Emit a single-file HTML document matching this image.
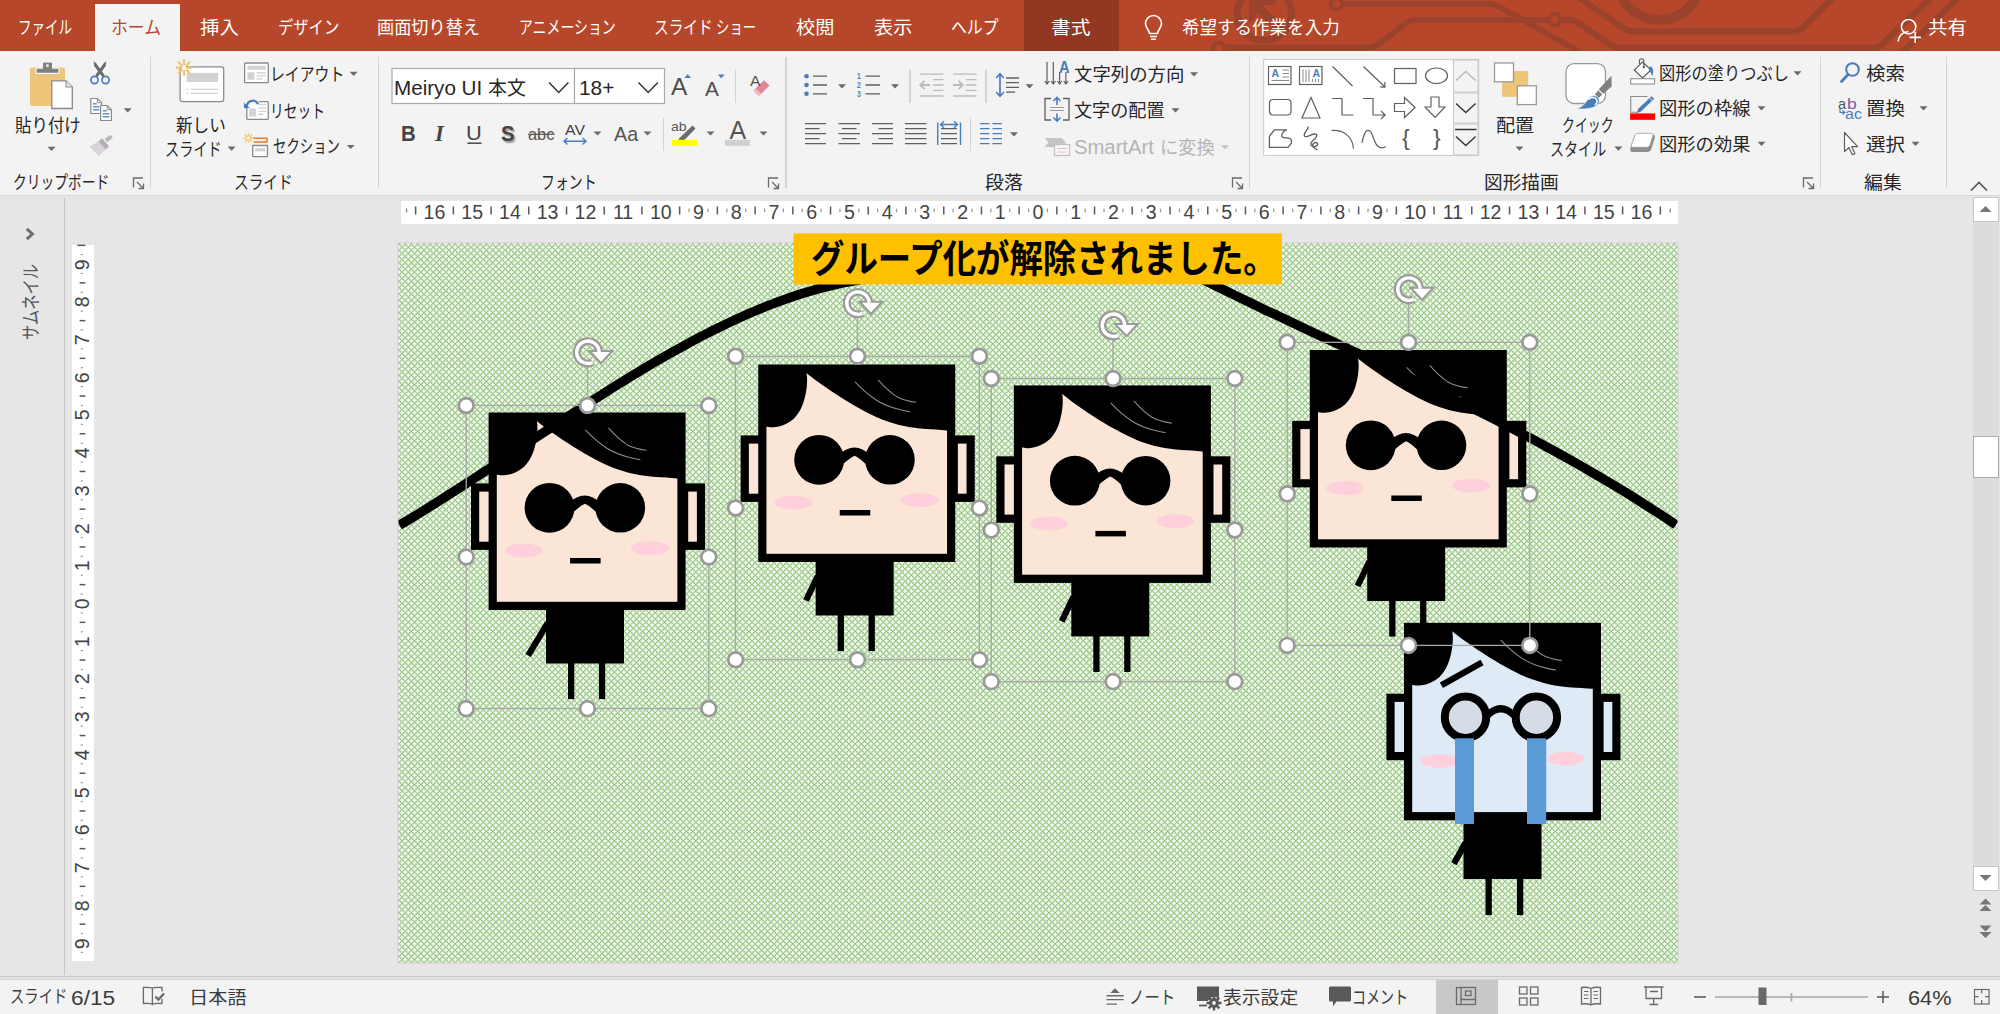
<!DOCTYPE html>
<html lang="ja"><head><meta charset="utf-8"><title>PowerPoint</title>
<style>
html,body{margin:0;padding:0}
body{width:2000px;height:1014px;position:relative;overflow:hidden;background:#e6e6e6;font-family:"Liberation Sans","Noto Sans CJK JP",sans-serif;}
body>div{position:absolute;box-sizing:border-box}
.t{position:absolute;white-space:nowrap;line-height:1;transform-origin:0 0;display:block}
svg{position:absolute;left:0;top:0;overflow:visible}
.rt{position:absolute;white-space:nowrap;line-height:1;font-size:19.600px;color:#444}
</style></head><body>
<div style="left:0px;top:0px;width:2000px;height:51px;background:#b7472a;"></div>
<div style="left:1024px;top:0px;width:95px;height:51px;background:#923822;"></div>
<div style="left:95px;top:4px;width:85px;height:48px;background:#f3f3f3;"></div>
<div style="left:0px;top:51px;width:2000px;height:143.6px;background:#f3f3f3;"></div>
<div style="left:0px;top:194.6px;width:2000px;height:1.5px;background:#d8d8d8;"></div>
<div style="left:0px;top:196.1px;width:2000px;height:782px;background:#e6e6e6;"></div>
<div style="left:63.5px;top:198px;width:1.5px;height:777px;background:#c6c6c6;"></div>
<div style="left:0px;top:977px;width:2000px;height:37px;background:#f3f3f3;"></div>
<div style="left:0px;top:975.6px;width:2000px;height:1.4px;background:#c6c6c6;"></div>
<div style="left:0px;top:977px;width:2000px;height:1.6px;background:#e3e3e3;"></div>
<div style="left:0px;top:978.6px;width:2000px;height:1.2px;background:#d2d2d2;"></div>
<div style="left:1436px;top:980px;width:61.5px;height:34px;background:#c8c8c8;"></div>
<div style="left:401px;top:201px;width:1276.5px;height:22.5px;background:#ffffff;"></div>
<div style="left:72px;top:244.5px;width:22px;height:716px;background:#ffffff;"></div>
<div style="left:1973px;top:196.5px;width:25.5px;height:694px;background:#dcdcdc;"></div>
<div style="left:1973px;top:196.5px;width:25.5px;height:25.5px;background:#ffffff;border:1px solid #c6c6c6"></div>
<div style="left:1973px;top:865.5px;width:25.5px;height:25px;background:#ffffff;border:1px solid #c6c6c6"></div>
<div style="left:1973px;top:435.5px;width:25.5px;height:42.5px;background:#ffffff;border:1px solid #ababab"></div>
<div style="left:149.8px;top:57px;width:1.3px;height:131px;background:#d4d4d4;"></div>
<div style="left:377.6px;top:57px;width:1.3px;height:131px;background:#d4d4d4;"></div>
<div style="left:785.4px;top:57px;width:1.3px;height:131px;background:#d4d4d4;"></div>
<div style="left:1249.1px;top:57px;width:1.3px;height:131px;background:#d4d4d4;"></div>
<div style="left:1820px;top:57px;width:1.3px;height:131px;background:#d4d4d4;"></div>
<div style="left:1946px;top:57px;width:1.3px;height:131px;background:#d4d4d4;"></div>
<div style="left:735px;top:69px;width:1.3px;height:34px;background:#d4d4d4;"></div>
<div style="left:662.7px;top:118px;width:1.3px;height:33px;background:#d4d4d4;"></div>
<div style="left:909.4px;top:70px;width:1.3px;height:33px;background:#d4d4d4;"></div>
<div style="left:985.4px;top:70px;width:1.3px;height:33px;background:#d4d4d4;"></div>
<div style="left:969.8px;top:118px;width:1.3px;height:33px;background:#d4d4d4;"></div>
<svg width="2000" height="1014" viewBox="0 0 2000 1014">
<defs>
<pattern id="hatch" x="398.2" y="243.2" width="25" height="25" patternUnits="userSpaceOnUse">
<rect width="25" height="25" fill="#fff"/>
<path d="M1.5625 1.5625h1.5625v1.5625h-1.5625zM1.5625 4.6875h1.5625v1.5625h-1.5625zM1.5625 7.8125h1.5625v1.5625h-1.5625zM1.5625 10.9375h1.5625v1.5625h-1.5625zM1.5625 14.0625h1.5625v1.5625h-1.5625zM1.5625 17.1875h1.5625v1.5625h-1.5625zM1.5625 20.3125h1.5625v1.5625h-1.5625zM1.5625 23.4375h1.5625v1.5625h-1.5625zM4.6875 1.5625h1.5625v1.5625h-1.5625zM4.6875 4.6875h1.5625v1.5625h-1.5625zM4.6875 7.8125h1.5625v1.5625h-1.5625zM4.6875 10.9375h1.5625v1.5625h-1.5625zM4.6875 14.0625h1.5625v1.5625h-1.5625zM4.6875 17.1875h1.5625v1.5625h-1.5625zM4.6875 20.3125h1.5625v1.5625h-1.5625zM4.6875 23.4375h1.5625v1.5625h-1.5625zM7.8125 1.5625h1.5625v1.5625h-1.5625zM7.8125 4.6875h1.5625v1.5625h-1.5625zM7.8125 7.8125h1.5625v1.5625h-1.5625zM7.8125 10.9375h1.5625v1.5625h-1.5625zM7.8125 14.0625h1.5625v1.5625h-1.5625zM7.8125 17.1875h1.5625v1.5625h-1.5625zM7.8125 20.3125h1.5625v1.5625h-1.5625zM7.8125 23.4375h1.5625v1.5625h-1.5625zM10.9375 1.5625h1.5625v1.5625h-1.5625zM10.9375 4.6875h1.5625v1.5625h-1.5625zM10.9375 7.8125h1.5625v1.5625h-1.5625zM10.9375 10.9375h1.5625v1.5625h-1.5625zM10.9375 14.0625h1.5625v1.5625h-1.5625zM10.9375 17.1875h1.5625v1.5625h-1.5625zM10.9375 20.3125h1.5625v1.5625h-1.5625zM10.9375 23.4375h1.5625v1.5625h-1.5625zM14.0625 1.5625h1.5625v1.5625h-1.5625zM14.0625 4.6875h1.5625v1.5625h-1.5625zM14.0625 7.8125h1.5625v1.5625h-1.5625zM14.0625 10.9375h1.5625v1.5625h-1.5625zM14.0625 14.0625h1.5625v1.5625h-1.5625zM14.0625 17.1875h1.5625v1.5625h-1.5625zM14.0625 20.3125h1.5625v1.5625h-1.5625zM14.0625 23.4375h1.5625v1.5625h-1.5625zM17.1875 1.5625h1.5625v1.5625h-1.5625zM17.1875 4.6875h1.5625v1.5625h-1.5625zM17.1875 7.8125h1.5625v1.5625h-1.5625zM17.1875 10.9375h1.5625v1.5625h-1.5625zM17.1875 14.0625h1.5625v1.5625h-1.5625zM17.1875 17.1875h1.5625v1.5625h-1.5625zM17.1875 20.3125h1.5625v1.5625h-1.5625zM17.1875 23.4375h1.5625v1.5625h-1.5625zM20.3125 1.5625h1.5625v1.5625h-1.5625zM20.3125 4.6875h1.5625v1.5625h-1.5625zM20.3125 7.8125h1.5625v1.5625h-1.5625zM20.3125 10.9375h1.5625v1.5625h-1.5625zM20.3125 14.0625h1.5625v1.5625h-1.5625zM20.3125 17.1875h1.5625v1.5625h-1.5625zM20.3125 20.3125h1.5625v1.5625h-1.5625zM20.3125 23.4375h1.5625v1.5625h-1.5625zM23.4375 1.5625h1.5625v1.5625h-1.5625zM23.4375 4.6875h1.5625v1.5625h-1.5625zM23.4375 7.8125h1.5625v1.5625h-1.5625zM23.4375 10.9375h1.5625v1.5625h-1.5625zM23.4375 14.0625h1.5625v1.5625h-1.5625zM23.4375 17.1875h1.5625v1.5625h-1.5625zM23.4375 20.3125h1.5625v1.5625h-1.5625zM23.4375 23.4375h1.5625v1.5625h-1.5625z" fill="#4e9f2a" fill-opacity=".75"/>
<path d="M0 0h1.5625v1.5625h-1.5625zM0 6.25h1.5625v1.5625h-1.5625zM0 12.5h1.5625v1.5625h-1.5625zM0 18.75h1.5625v1.5625h-1.5625zM3.125 3.125h1.5625v1.5625h-1.5625zM3.125 9.375h1.5625v1.5625h-1.5625zM3.125 15.625h1.5625v1.5625h-1.5625zM3.125 21.875h1.5625v1.5625h-1.5625zM6.25 0h1.5625v1.5625h-1.5625zM6.25 6.25h1.5625v1.5625h-1.5625zM6.25 12.5h1.5625v1.5625h-1.5625zM6.25 18.75h1.5625v1.5625h-1.5625zM9.375 3.125h1.5625v1.5625h-1.5625zM9.375 9.375h1.5625v1.5625h-1.5625zM9.375 15.625h1.5625v1.5625h-1.5625zM9.375 21.875h1.5625v1.5625h-1.5625zM12.5 0h1.5625v1.5625h-1.5625zM12.5 6.25h1.5625v1.5625h-1.5625zM12.5 12.5h1.5625v1.5625h-1.5625zM12.5 18.75h1.5625v1.5625h-1.5625zM15.625 3.125h1.5625v1.5625h-1.5625zM15.625 9.375h1.5625v1.5625h-1.5625zM15.625 15.625h1.5625v1.5625h-1.5625zM15.625 21.875h1.5625v1.5625h-1.5625zM18.75 0h1.5625v1.5625h-1.5625zM18.75 6.25h1.5625v1.5625h-1.5625zM18.75 12.5h1.5625v1.5625h-1.5625zM18.75 18.75h1.5625v1.5625h-1.5625zM21.875 3.125h1.5625v1.5625h-1.5625zM21.875 9.375h1.5625v1.5625h-1.5625zM21.875 15.625h1.5625v1.5625h-1.5625zM21.875 21.875h1.5625v1.5625h-1.5625z" fill="#4e9f2a" fill-opacity=".97"/>
</pattern>
<clipPath id="slideclip"><rect x="398.5" y="243.5" width="1279.0" height="719.0"/></clipPath>
</defs>
<rect x="397.5" y="242.5" width="1281.0" height="721.0" fill="#cfcfcf"/>
<rect x="398.5" y="243.5" width="1279.0" height="719.0" fill="url(#hatch)"/>
<g clip-path="url(#slideclip)">
<g transform="translate(488.6 412.5)"><rect x="79.4" y="250" width="6.3" height="36.6"/><rect x="110.3" y="250" width="6.3" height="36.6"/><path d="M59.2 210.3L39.5 243" stroke="#000" stroke-width="6.200" fill="none"/><rect x="57.4" y="195" width="78" height="56"/><rect x="-13.500" y="75" width="20" height="58.300" fill="#fbe5d6" stroke="#000" stroke-width="8.200"/><rect x="195.500" y="75" width="16.900" height="58.300" fill="#fbe5d6" stroke="#000" stroke-width="8.200"/><rect x="4.100" y="4.100" width="188.800" height="189.300" fill="#fbe5d6" stroke="#000" stroke-width="8.200"/><path d="M4 4H48.3V8.2C49.600 17 48.500 27 45.700 36.300C43 45 39 51 35.800 53.900C30 59 23 62 17 62.500C13 63 10 62.600 8 62.200H4Z"/><path d="M48 4H193V66H188.700C181 65.300 174 65 167.800 64.600C160 64 152 62.800 145.800 61.600C138 60 130 57.400 123.800 55C116 52 108 47.600 101.800 44.200C94 40 86 35 79.800 31C72 26 64 20.500 57.800 16C54 13.200 51 10.700 48 8.200Z"/><path d="M96.800 17.400C103 24 111 31 118.300 35.800C125 40 133 43 140.300 44.800C144 45.800 148 46.600 151.800 47.300" fill="none" stroke="#8a8a8a" stroke-width="1.100"/><path d="M119.900 15.400C124 20 131 27.500 138.100 31.900C144 35.300 151 36.800 157.900 37.700" fill="none" stroke="#8a8a8a" stroke-width="1.100"/><ellipse cx="35.100" cy="138.100" rx="18.800" ry="7" fill="#fdd0dc"/><ellipse cx="161.300" cy="135.800" rx="18.800" ry="7" fill="#fdd0dc"/><circle cx="60.900" cy="95.300" r="24.900"/><circle cx="131.700" cy="95.300" r="24.800"/><path d="M80 90.500Q96.400 75.500 112 90.500V101L106.800 99.100Q101 93 96.400 91.200Q92 93 85.500 99.100L80 101Z"/><rect x="81.500" y="145.500" width="30.500" height="5.500"/></g>
<g transform="translate(758.25 364.5)"><rect x="79.4" y="250" width="6.3" height="36.6"/><rect x="110.3" y="250" width="6.3" height="36.6"/><path d="M59.5 211.5L47.8 236" stroke="#000" stroke-width="6.200" fill="none"/><rect x="57.4" y="195" width="78" height="56"/><rect x="-13.500" y="75" width="20" height="58.300" fill="#fbe5d6" stroke="#000" stroke-width="8.200"/><rect x="195.500" y="75" width="16.900" height="58.300" fill="#fbe5d6" stroke="#000" stroke-width="8.200"/><rect x="4.100" y="4.100" width="188.800" height="189.300" fill="#fbe5d6" stroke="#000" stroke-width="8.200"/><path d="M4 4H48.3V8.2C49.600 17 48.500 27 45.700 36.300C43 45 39 51 35.800 53.900C30 59 23 62 17 62.500C13 63 10 62.600 8 62.200H4Z"/><path d="M48 4H193V66H188.700C181 65.300 174 65 167.800 64.600C160 64 152 62.800 145.800 61.600C138 60 130 57.400 123.800 55C116 52 108 47.600 101.800 44.200C94 40 86 35 79.800 31C72 26 64 20.500 57.800 16C54 13.200 51 10.700 48 8.200Z"/><path d="M96.800 17.400C103 24 111 31 118.300 35.800C125 40 133 43 140.300 44.800C144 45.800 148 46.600 151.800 47.300" fill="none" stroke="#8a8a8a" stroke-width="1.100"/><path d="M119.900 15.400C124 20 131 27.500 138.100 31.900C144 35.300 151 36.800 157.900 37.700" fill="none" stroke="#8a8a8a" stroke-width="1.100"/><ellipse cx="35.100" cy="138.100" rx="18.800" ry="7" fill="#fdd0dc"/><ellipse cx="161.300" cy="135.800" rx="18.800" ry="7" fill="#fdd0dc"/><circle cx="60.900" cy="95.300" r="24.900"/><circle cx="131.700" cy="95.300" r="24.800"/><path d="M80 90.500Q96.400 75.500 112 90.500V101L106.800 99.100Q101 93 96.400 91.200Q92 93 85.500 99.100L80 101Z"/><rect x="81.500" y="145.500" width="30.500" height="5.500"/></g>
<g transform="translate(1013.9 385.4)"><rect x="79.4" y="250" width="6.3" height="36.6"/><rect x="110.3" y="250" width="6.3" height="36.6"/><path d="M59.5 211.5L47.8 236" stroke="#000" stroke-width="6.200" fill="none"/><rect x="57.4" y="195" width="78" height="56"/><rect x="-13.500" y="75" width="20" height="58.300" fill="#fbe5d6" stroke="#000" stroke-width="8.200"/><rect x="195.500" y="75" width="16.900" height="58.300" fill="#fbe5d6" stroke="#000" stroke-width="8.200"/><rect x="4.100" y="4.100" width="188.800" height="189.300" fill="#fbe5d6" stroke="#000" stroke-width="8.200"/><path d="M4 4H48.3V8.2C49.600 17 48.500 27 45.700 36.300C43 45 39 51 35.800 53.900C30 59 23 62 17 62.500C13 63 10 62.600 8 62.200H4Z"/><path d="M48 4H193V66H188.700C181 65.300 174 65 167.800 64.600C160 64 152 62.800 145.800 61.600C138 60 130 57.400 123.800 55C116 52 108 47.600 101.800 44.200C94 40 86 35 79.800 31C72 26 64 20.500 57.800 16C54 13.200 51 10.700 48 8.200Z"/><path d="M96.800 17.400C103 24 111 31 118.300 35.800C125 40 133 43 140.300 44.800C144 45.800 148 46.600 151.800 47.300" fill="none" stroke="#8a8a8a" stroke-width="1.100"/><path d="M119.900 15.400C124 20 131 27.500 138.100 31.900C144 35.300 151 36.800 157.900 37.700" fill="none" stroke="#8a8a8a" stroke-width="1.100"/><ellipse cx="35.100" cy="138.100" rx="18.800" ry="7" fill="#fdd0dc"/><ellipse cx="161.300" cy="135.800" rx="18.800" ry="7" fill="#fdd0dc"/><circle cx="60.900" cy="95.300" r="24.900"/><circle cx="131.700" cy="95.300" r="24.800"/><path d="M80 90.500Q96.400 75.500 112 90.500V101L106.800 99.100Q101 93 96.400 91.200Q92 93 85.500 99.100L80 101Z"/><rect x="81.500" y="145.500" width="30.500" height="5.500"/></g>
<g transform="translate(1309.8 350)"><rect x="79.4" y="250" width="6.3" height="36.6"/><rect x="110.3" y="250" width="6.3" height="36.6"/><path d="M59.5 211.5L47.8 236" stroke="#000" stroke-width="6.200" fill="none"/><rect x="57.4" y="195" width="78" height="56"/><rect x="-13.500" y="75" width="20" height="58.300" fill="#fbe5d6" stroke="#000" stroke-width="8.200"/><rect x="195.500" y="75" width="16.900" height="58.300" fill="#fbe5d6" stroke="#000" stroke-width="8.200"/><rect x="4.100" y="4.100" width="188.800" height="189.300" fill="#fbe5d6" stroke="#000" stroke-width="8.200"/><path d="M4 4H48.3V8.2C49.600 17 48.500 27 45.700 36.300C43 45 39 51 35.800 53.900C30 59 23 62 17 62.500C13 63 10 62.600 8 62.200H4Z"/><path d="M48 4H193V66H188.700C181 65.300 174 65 167.800 64.600C160 64 152 62.800 145.800 61.600C138 60 130 57.400 123.800 55C116 52 108 47.600 101.800 44.200C94 40 86 35 79.800 31C72 26 64 20.500 57.800 16C54 13.200 51 10.700 48 8.200Z"/><path d="M96.800 17.400C103 24 111 31 118.300 35.800C125 40 133 43 140.300 44.800C144 45.800 148 46.600 151.800 47.300" fill="none" stroke="#8a8a8a" stroke-width="1.100"/><path d="M119.900 15.400C124 20 131 27.500 138.100 31.900C144 35.300 151 36.800 157.900 37.700" fill="none" stroke="#8a8a8a" stroke-width="1.100"/><ellipse cx="35.100" cy="138.100" rx="18.800" ry="7" fill="#fdd0dc"/><ellipse cx="161.300" cy="135.800" rx="18.800" ry="7" fill="#fdd0dc"/><circle cx="60.900" cy="95.300" r="24.900"/><circle cx="131.700" cy="95.300" r="24.800"/><path d="M80 90.500Q96.400 75.500 112 90.500V101L106.800 99.100Q101 93 96.400 91.200Q92 93 85.500 99.100L80 101Z"/><rect x="81.500" y="145.500" width="30.500" height="5.500"/></g>
<g transform="translate(1404 622.8)"><rect x="81.5" y="255.2" width="6.3" height="37.1"/><rect x="113" y="255.2" width="6.3" height="37.1"/><path d="M61.6 219.7L49.9 240.9" stroke="#000" stroke-width="6.200" fill="none"/><rect x="59.5" y="195" width="78" height="61.2"/><rect x="-13.500" y="75" width="20" height="58.300" fill="#deebf7" stroke="#000" stroke-width="8.200"/><rect x="195.500" y="75" width="16.900" height="58.300" fill="#deebf7" stroke="#000" stroke-width="8.200"/><rect x="4.100" y="4.100" width="188.800" height="189.300" fill="#deebf7" stroke="#000" stroke-width="8.200"/><path d="M4 4H48.3V8.2C49.600 17 48.500 27 45.700 36.300C43 45 39 51 35.800 53.900C30 59 23 62 17 62.500C13 63 10 62.600 8 62.200H4Z"/><path d="M48 4H193V66H188.700C181 65.300 174 65 167.800 64.600C160 64 152 62.800 145.800 61.600C138 60 130 57.400 123.800 55C116 52 108 47.600 101.800 44.200C94 40 86 35 79.800 31C72 26 64 20.500 57.800 16C54 13.200 51 10.700 48 8.200Z"/><path d="M96.800 17.400C103 24 111 31 118.300 35.800C125 40 133 43 140.300 44.800C144 45.800 148 46.600 151.800 47.300" fill="none" stroke="#8a8a8a" stroke-width="1.100"/><path d="M119.900 15.400C124 20 131 27.500 138.100 31.900C144 35.300 151 36.800 157.900 37.700" fill="none" stroke="#8a8a8a" stroke-width="1.100"/><ellipse cx="35.100" cy="138.100" rx="18.800" ry="7" fill="#fdd0dc"/><ellipse cx="161.300" cy="135.800" rx="18.800" ry="7" fill="#fdd0dc"/><circle cx="61.500" cy="94.400" r="20.700" fill="#d6dce5" stroke="#000" stroke-width="8"/><circle cx="132.400" cy="94.400" r="20.700" fill="#d6dce5" stroke="#000" stroke-width="8"/><path d="M83.500 92.500Q96.800 79.500 110 92.500" fill="none" stroke="#000" stroke-width="7"/><path d="M37.400 62.500L78 39.700" stroke="#000" stroke-width="6.200" fill="none"/><rect x="51" y="115.500" width="19" height="85.700" fill="#5b9bd5"/><rect x="123" y="115.500" width="19.200" height="85.700" fill="#5b9bd5"/></g>
<path d="M399.5 525.2L408.9 519.6L418.3 513.9L427.7 508.1L437.0 502.2L446.4 496.3L455.8 490.3L465.2 484.2L474.6 478.1L484.0 472.0L493.4 465.8L502.7 459.6L512.1 453.4L521.5 447.2L530.9 440.9L540.3 434.7L549.7 428.5L559.1 422.3L568.4 416.2L577.8 410.1L587.2 404.0L596.6 398.0L606.0 392.0L615.4 386.1L624.8 380.3L634.1 374.5L643.5 368.9L652.9 363.3L662.3 357.9L671.7 352.5L681.1 347.3L690.4 342.2L699.8 337.2L709.2 332.3L718.6 327.7L728.0 323.1L737.4 318.7L746.8 314.5L756.1 310.5L765.5 306.7L774.9 303.0L784.3 299.6L793.7 296.3L803.1 293.3L812.5 290.5L821.8 287.9L831.2 285.6L840.6 283.4L850.0 281.6C960.0 261.4 1125.0 240.4 1195 275.600L1205.0 280.6L1215.0 285.6L1225.1 290.5L1235.1 295.4L1245.1 300.3L1255.1 305.1L1265.1 309.9L1275.2 314.6L1285.2 319.3L1295.2 324.1L1305.2 328.8L1315.2 333.5L1325.3 338.1L1335.3 342.8L1345.3 347.5L1355.3 352.2L1365.4 356.8L1375.4 361.5L1385.4 366.2L1395.4 371.0L1405.4 375.7L1415.5 380.5L1425.5 385.3L1435.5 390.1L1445.5 395.0L1455.5 399.9L1465.6 404.8L1475.6 409.8L1485.6 414.8L1495.6 419.9L1505.6 425.1L1515.7 430.3L1525.7 435.6L1535.7 440.9L1545.7 446.3L1555.8 451.8L1565.8 457.4L1575.8 463.0L1585.8 468.8L1595.8 474.6L1605.9 480.5L1615.9 486.5L1625.9 492.6L1635.9 498.8L1645.9 505.2L1656.0 511.6L1666.0 518.1L1676.0 524.8" fill="none" stroke="#000" stroke-width="9.400" stroke-linejoin="round"/>
</g>
<rect x="793.500" y="233.300" width="488.300" height="51.200" fill="#ffc000"/>
<rect x="466.2" y="405.5" width="242.6" height="303.1" fill="none" stroke="#a8a8a8" stroke-width="1.300"/><path d="M587.5 405.5V365.5" stroke="#a8a8a8" stroke-width="1.400"/><g transform="translate(588 352.3)"><path d="M4.500 10.200A11.200 11.200 0 1 1 11 -1.500" fill="none" stroke="#9b9b9b" stroke-width="7.800"/><path d="M4.500 10.200A11.200 11.200 0 1 1 11 -1.500" fill="none" stroke="#fff" stroke-width="3.400"/><path d="M1.500 -1.300H24.300L13 10.800Z" fill="#fff" stroke="#9b9b9b" stroke-width="2.100" stroke-linejoin="miter"/><path d="M9.300 -0.300h3.400v-2.200h-3.400z" fill="#fff"/></g><circle cx="466.2" cy="405.5" r="7.400" fill="#fff" stroke="#999" stroke-width="2.700"/><circle cx="466.2" cy="557.05" r="7.400" fill="#fff" stroke="#999" stroke-width="2.700"/><circle cx="466.2" cy="708.6" r="7.400" fill="#fff" stroke="#999" stroke-width="2.700"/><circle cx="587.5" cy="405.5" r="7.400" fill="#fff" stroke="#999" stroke-width="2.700"/><circle cx="587.5" cy="708.6" r="7.400" fill="#fff" stroke="#999" stroke-width="2.700"/><circle cx="708.8" cy="405.5" r="7.400" fill="#fff" stroke="#999" stroke-width="2.700"/><circle cx="708.8" cy="557.05" r="7.400" fill="#fff" stroke="#999" stroke-width="2.700"/><circle cx="708.8" cy="708.6" r="7.400" fill="#fff" stroke="#999" stroke-width="2.700"/>
<rect x="735.6" y="356.3" width="243.8" height="303.4" fill="none" stroke="#a8a8a8" stroke-width="1.300"/><path d="M857.5 356.3V316.3" stroke="#a8a8a8" stroke-width="1.400"/><g transform="translate(858 303.1)"><path d="M4.500 10.200A11.200 11.200 0 1 1 11 -1.500" fill="none" stroke="#9b9b9b" stroke-width="7.800"/><path d="M4.500 10.200A11.200 11.200 0 1 1 11 -1.500" fill="none" stroke="#fff" stroke-width="3.400"/><path d="M1.500 -1.300H24.300L13 10.800Z" fill="#fff" stroke="#9b9b9b" stroke-width="2.100" stroke-linejoin="miter"/><path d="M9.300 -0.300h3.400v-2.200h-3.400z" fill="#fff"/></g><circle cx="735.6" cy="356.3" r="7.400" fill="#fff" stroke="#999" stroke-width="2.700"/><circle cx="735.6" cy="508" r="7.400" fill="#fff" stroke="#999" stroke-width="2.700"/><circle cx="735.6" cy="659.7" r="7.400" fill="#fff" stroke="#999" stroke-width="2.700"/><circle cx="857.5" cy="356.3" r="7.400" fill="#fff" stroke="#999" stroke-width="2.700"/><circle cx="857.5" cy="659.7" r="7.400" fill="#fff" stroke="#999" stroke-width="2.700"/><circle cx="979.4" cy="356.3" r="7.400" fill="#fff" stroke="#999" stroke-width="2.700"/><circle cx="979.4" cy="508" r="7.400" fill="#fff" stroke="#999" stroke-width="2.700"/><circle cx="979.4" cy="659.7" r="7.400" fill="#fff" stroke="#999" stroke-width="2.700"/>
<rect x="991.3" y="378.5" width="243.5" height="303.1" fill="none" stroke="#a8a8a8" stroke-width="1.300"/><path d="M1113.05 378.5V338.5" stroke="#a8a8a8" stroke-width="1.400"/><g transform="translate(1113.55 325.3)"><path d="M4.500 10.200A11.200 11.200 0 1 1 11 -1.500" fill="none" stroke="#9b9b9b" stroke-width="7.800"/><path d="M4.500 10.200A11.200 11.200 0 1 1 11 -1.500" fill="none" stroke="#fff" stroke-width="3.400"/><path d="M1.500 -1.300H24.300L13 10.800Z" fill="#fff" stroke="#9b9b9b" stroke-width="2.100" stroke-linejoin="miter"/><path d="M9.300 -0.300h3.400v-2.200h-3.400z" fill="#fff"/></g><circle cx="991.3" cy="378.5" r="7.400" fill="#fff" stroke="#999" stroke-width="2.700"/><circle cx="991.3" cy="530.05" r="7.400" fill="#fff" stroke="#999" stroke-width="2.700"/><circle cx="991.3" cy="681.6" r="7.400" fill="#fff" stroke="#999" stroke-width="2.700"/><circle cx="1113.05" cy="378.5" r="7.400" fill="#fff" stroke="#999" stroke-width="2.700"/><circle cx="1113.05" cy="681.6" r="7.400" fill="#fff" stroke="#999" stroke-width="2.700"/><circle cx="1234.8" cy="378.5" r="7.400" fill="#fff" stroke="#999" stroke-width="2.700"/><circle cx="1234.8" cy="530.05" r="7.400" fill="#fff" stroke="#999" stroke-width="2.700"/><circle cx="1234.8" cy="681.6" r="7.400" fill="#fff" stroke="#999" stroke-width="2.700"/>
<rect x="1287.2" y="342.3" width="242.6" height="303.1" fill="none" stroke="#a8a8a8" stroke-width="1.300"/><path d="M1408.5 342.3V302.3" stroke="#a8a8a8" stroke-width="1.400"/><g transform="translate(1409 289.1)"><path d="M4.500 10.200A11.200 11.200 0 1 1 11 -1.500" fill="none" stroke="#9b9b9b" stroke-width="7.800"/><path d="M4.500 10.200A11.200 11.200 0 1 1 11 -1.500" fill="none" stroke="#fff" stroke-width="3.400"/><path d="M1.500 -1.300H24.300L13 10.800Z" fill="#fff" stroke="#9b9b9b" stroke-width="2.100" stroke-linejoin="miter"/><path d="M9.300 -0.300h3.400v-2.200h-3.400z" fill="#fff"/></g><circle cx="1287.2" cy="342.3" r="7.400" fill="#fff" stroke="#999" stroke-width="2.700"/><circle cx="1287.2" cy="493.85" r="7.400" fill="#fff" stroke="#999" stroke-width="2.700"/><circle cx="1287.2" cy="645.4" r="7.400" fill="#fff" stroke="#999" stroke-width="2.700"/><circle cx="1408.5" cy="342.3" r="7.400" fill="#fff" stroke="#999" stroke-width="2.700"/><circle cx="1408.5" cy="645.4" r="7.400" fill="#fff" stroke="#999" stroke-width="2.700"/><circle cx="1529.8" cy="342.3" r="7.400" fill="#fff" stroke="#999" stroke-width="2.700"/><circle cx="1529.8" cy="493.85" r="7.400" fill="#fff" stroke="#999" stroke-width="2.700"/><circle cx="1529.8" cy="645.4" r="7.400" fill="#fff" stroke="#999" stroke-width="2.700"/>
</svg>
<svg width="2000" height="1014" viewBox="0 0 2000 1014">
<defs><clipPath id="tabclip"><rect x="1119" y="0" width="881" height="51"/></clipPath></defs>
<g fill="none" stroke="#9a422b" stroke-width="5.800" clip-path="url(#tabclip)"><circle cx="1264.400" cy="13.300" r="27.100" stroke-width="7.300"/><path d="M1249 -2H1275.600V4L1263 5.600L1286 29.400L1277 33L1258 13.300L1249 23.800Z" fill="#9a422b" stroke="none"/><circle cx="1336.400" cy="3.800" r="5.700" stroke-width="4"/><path d="M1343.500 3.800H1488c5 0 8 1 12 3.500L1580 52"/><circle cx="1218.900" cy="48.300" r="5.700" stroke-width="4"/><path d="M1226 47.600H1368c5 0 8-1.500 11-4l26-19.500c4-3 7-4.300 12-4.300H1548"/><circle cx="1554.800" cy="19.500" r="5.700" stroke-width="4"/><path d="M1562 19.800h6c4 0 7 1 10 3l30 20.500c4 3 8 4.600 13 4.600H1872c6 0 9-2 12-5.500L1932 -3" stroke-width="6.200"/><path d="M1578 -3L1621 26.500c4 3 8 5 13 5H1793c5 0 8-2 11-5L1834 -3" stroke-width="6.200"/><circle cx="1659.200" cy="-22.300" r="42.200" stroke-width="9.700"/><path d="M1902 53L1959 -3" stroke-width="6.200"/></g>
<rect x="414.9" y="206.5" width="1.5" height="8" fill="#5a5a5a"/>
<rect x="452.6" y="206.5" width="1.5" height="8" fill="#5a5a5a"/>
<rect x="490.3" y="206.5" width="1.5" height="8" fill="#5a5a5a"/>
<rect x="528.0" y="206.5" width="1.5" height="8" fill="#5a5a5a"/>
<rect x="565.8" y="206.5" width="1.5" height="8" fill="#5a5a5a"/>
<rect x="603.5" y="206.5" width="1.5" height="8" fill="#5a5a5a"/>
<rect x="641.2" y="206.5" width="1.5" height="8" fill="#5a5a5a"/>
<rect x="678.9" y="206.5" width="1.5" height="8" fill="#5a5a5a"/>
<rect x="716.6" y="206.5" width="1.5" height="8" fill="#5a5a5a"/>
<rect x="754.4" y="206.5" width="1.5" height="8" fill="#5a5a5a"/>
<rect x="792.1" y="206.5" width="1.5" height="8" fill="#5a5a5a"/>
<rect x="829.8" y="206.5" width="1.5" height="8" fill="#5a5a5a"/>
<rect x="867.5" y="206.5" width="1.5" height="8" fill="#5a5a5a"/>
<rect x="905.2" y="206.5" width="1.5" height="8" fill="#5a5a5a"/>
<rect x="943.0" y="206.5" width="1.5" height="8" fill="#5a5a5a"/>
<rect x="980.7" y="206.5" width="1.5" height="8" fill="#5a5a5a"/>
<rect x="1018.4" y="206.5" width="1.5" height="8" fill="#5a5a5a"/>
<rect x="1056.1" y="206.5" width="1.5" height="8" fill="#5a5a5a"/>
<rect x="1093.8" y="206.5" width="1.5" height="8" fill="#5a5a5a"/>
<rect x="1131.5" y="206.5" width="1.5" height="8" fill="#5a5a5a"/>
<rect x="1169.3" y="206.5" width="1.5" height="8" fill="#5a5a5a"/>
<rect x="1207.0" y="206.5" width="1.5" height="8" fill="#5a5a5a"/>
<rect x="1244.7" y="206.5" width="1.5" height="8" fill="#5a5a5a"/>
<rect x="1282.4" y="206.5" width="1.5" height="8" fill="#5a5a5a"/>
<rect x="1320.2" y="206.5" width="1.5" height="8" fill="#5a5a5a"/>
<rect x="1357.9" y="206.5" width="1.5" height="8" fill="#5a5a5a"/>
<rect x="1395.6" y="206.5" width="1.5" height="8" fill="#5a5a5a"/>
<rect x="1433.3" y="206.5" width="1.5" height="8" fill="#5a5a5a"/>
<rect x="1471.0" y="206.5" width="1.5" height="8" fill="#5a5a5a"/>
<rect x="1508.8" y="206.5" width="1.5" height="8" fill="#5a5a5a"/>
<rect x="1546.5" y="206.5" width="1.5" height="8" fill="#5a5a5a"/>
<rect x="1584.2" y="206.5" width="1.5" height="8" fill="#5a5a5a"/>
<rect x="1621.9" y="206.5" width="1.5" height="8" fill="#5a5a5a"/>
<rect x="1659.6" y="206.5" width="1.5" height="8" fill="#5a5a5a"/>
<rect x="688.4" y="208.600" width="1.300" height="3.600" fill="#9a9a9a"/>
<rect x="707.3" y="208.600" width="1.300" height="3.600" fill="#9a9a9a"/>
<rect x="726.2" y="208.600" width="1.300" height="3.600" fill="#9a9a9a"/>
<rect x="745.0" y="208.600" width="1.300" height="3.600" fill="#9a9a9a"/>
<rect x="763.9" y="208.600" width="1.300" height="3.600" fill="#9a9a9a"/>
<rect x="782.7" y="208.600" width="1.300" height="3.600" fill="#9a9a9a"/>
<rect x="801.6" y="208.600" width="1.300" height="3.600" fill="#9a9a9a"/>
<rect x="820.5" y="208.600" width="1.300" height="3.600" fill="#9a9a9a"/>
<rect x="839.3" y="208.600" width="1.300" height="3.600" fill="#9a9a9a"/>
<rect x="858.2" y="208.600" width="1.300" height="3.600" fill="#9a9a9a"/>
<rect x="877.0" y="208.600" width="1.300" height="3.600" fill="#9a9a9a"/>
<rect x="895.9" y="208.600" width="1.300" height="3.600" fill="#9a9a9a"/>
<rect x="914.8" y="208.600" width="1.300" height="3.600" fill="#9a9a9a"/>
<rect x="933.6" y="208.600" width="1.300" height="3.600" fill="#9a9a9a"/>
<rect x="952.5" y="208.600" width="1.300" height="3.600" fill="#9a9a9a"/>
<rect x="971.3" y="208.600" width="1.300" height="3.600" fill="#9a9a9a"/>
<rect x="990.2" y="208.600" width="1.300" height="3.600" fill="#9a9a9a"/>
<rect x="1009.1" y="208.600" width="1.300" height="3.600" fill="#9a9a9a"/>
<rect x="1027.9" y="208.600" width="1.300" height="3.600" fill="#9a9a9a"/>
<rect x="1046.8" y="208.600" width="1.300" height="3.600" fill="#9a9a9a"/>
<rect x="1065.6" y="208.600" width="1.300" height="3.600" fill="#9a9a9a"/>
<rect x="1084.5" y="208.600" width="1.300" height="3.600" fill="#9a9a9a"/>
<rect x="1103.4" y="208.600" width="1.300" height="3.600" fill="#9a9a9a"/>
<rect x="1122.2" y="208.600" width="1.300" height="3.600" fill="#9a9a9a"/>
<rect x="1141.1" y="208.600" width="1.300" height="3.600" fill="#9a9a9a"/>
<rect x="1159.9" y="208.600" width="1.300" height="3.600" fill="#9a9a9a"/>
<rect x="1178.8" y="208.600" width="1.300" height="3.600" fill="#9a9a9a"/>
<rect x="1197.7" y="208.600" width="1.300" height="3.600" fill="#9a9a9a"/>
<rect x="1216.5" y="208.600" width="1.300" height="3.600" fill="#9a9a9a"/>
<rect x="1235.4" y="208.600" width="1.300" height="3.600" fill="#9a9a9a"/>
<rect x="1254.2" y="208.600" width="1.300" height="3.600" fill="#9a9a9a"/>
<rect x="1273.1" y="208.600" width="1.300" height="3.600" fill="#9a9a9a"/>
<rect x="1292.0" y="208.600" width="1.300" height="3.600" fill="#9a9a9a"/>
<rect x="1310.8" y="208.600" width="1.300" height="3.600" fill="#9a9a9a"/>
<rect x="1329.7" y="208.600" width="1.300" height="3.600" fill="#9a9a9a"/>
<rect x="1348.5" y="208.600" width="1.300" height="3.600" fill="#9a9a9a"/>
<rect x="1367.4" y="208.600" width="1.300" height="3.600" fill="#9a9a9a"/>
<rect x="1386.3" y="208.600" width="1.300" height="3.600" fill="#9a9a9a"/>
<rect x="405.800" y="208.500" width="1.400" height="4" fill="#8a8a8a"/>
<rect x="1669.5" y="208.5" width="1.4" height="4" fill="#8a8a8a"/>
<rect x="79.600" y="282.1" width="5.800" height="1.500" fill="#5a5a5a"/>
<rect x="79.600" y="319.9" width="5.800" height="1.500" fill="#5a5a5a"/>
<rect x="79.600" y="357.6" width="5.800" height="1.500" fill="#5a5a5a"/>
<rect x="79.600" y="395.3" width="5.800" height="1.500" fill="#5a5a5a"/>
<rect x="79.600" y="433.0" width="5.800" height="1.500" fill="#5a5a5a"/>
<rect x="79.600" y="470.7" width="5.800" height="1.500" fill="#5a5a5a"/>
<rect x="79.600" y="508.4" width="5.800" height="1.500" fill="#5a5a5a"/>
<rect x="79.600" y="546.2" width="5.800" height="1.500" fill="#5a5a5a"/>
<rect x="79.600" y="583.9" width="5.800" height="1.500" fill="#5a5a5a"/>
<rect x="79.600" y="621.6" width="5.800" height="1.500" fill="#5a5a5a"/>
<rect x="79.600" y="659.3" width="5.800" height="1.500" fill="#5a5a5a"/>
<rect x="79.600" y="697.0" width="5.800" height="1.500" fill="#5a5a5a"/>
<rect x="79.600" y="734.8" width="5.800" height="1.500" fill="#5a5a5a"/>
<rect x="79.600" y="772.5" width="5.800" height="1.500" fill="#5a5a5a"/>
<rect x="79.600" y="810.2" width="5.800" height="1.500" fill="#5a5a5a"/>
<rect x="79.600" y="847.9" width="5.800" height="1.500" fill="#5a5a5a"/>
<rect x="79.600" y="885.6" width="5.800" height="1.500" fill="#5a5a5a"/>
<rect x="79.600" y="923.4" width="5.800" height="1.500" fill="#5a5a5a"/>
<rect x="80.700" y="254.0" width="2.200" height="1.200" fill="#9a9a9a"/>
<rect x="80.700" y="272.8" width="2.200" height="1.200" fill="#9a9a9a"/>
<rect x="80.700" y="291.7" width="2.200" height="1.200" fill="#9a9a9a"/>
<rect x="80.700" y="310.6" width="2.200" height="1.200" fill="#9a9a9a"/>
<rect x="80.700" y="329.4" width="2.200" height="1.200" fill="#9a9a9a"/>
<rect x="80.700" y="348.3" width="2.200" height="1.200" fill="#9a9a9a"/>
<rect x="80.700" y="367.1" width="2.200" height="1.200" fill="#9a9a9a"/>
<rect x="80.700" y="386.0" width="2.200" height="1.200" fill="#9a9a9a"/>
<rect x="80.700" y="404.9" width="2.200" height="1.200" fill="#9a9a9a"/>
<rect x="80.700" y="423.7" width="2.200" height="1.200" fill="#9a9a9a"/>
<rect x="80.700" y="442.6" width="2.200" height="1.200" fill="#9a9a9a"/>
<rect x="80.700" y="461.4" width="2.200" height="1.200" fill="#9a9a9a"/>
<rect x="80.700" y="480.3" width="2.200" height="1.200" fill="#9a9a9a"/>
<rect x="80.700" y="499.2" width="2.200" height="1.200" fill="#9a9a9a"/>
<rect x="80.700" y="518.0" width="2.200" height="1.200" fill="#9a9a9a"/>
<rect x="80.700" y="536.9" width="2.200" height="1.200" fill="#9a9a9a"/>
<rect x="80.700" y="555.8" width="2.200" height="1.200" fill="#9a9a9a"/>
<rect x="80.700" y="574.6" width="2.200" height="1.200" fill="#9a9a9a"/>
<rect x="80.700" y="593.5" width="2.200" height="1.200" fill="#9a9a9a"/>
<rect x="80.700" y="612.3" width="2.200" height="1.200" fill="#9a9a9a"/>
<rect x="80.700" y="631.2" width="2.200" height="1.200" fill="#9a9a9a"/>
<rect x="80.700" y="650.0" width="2.200" height="1.200" fill="#9a9a9a"/>
<rect x="80.700" y="668.9" width="2.200" height="1.200" fill="#9a9a9a"/>
<rect x="80.700" y="687.8" width="2.200" height="1.200" fill="#9a9a9a"/>
<rect x="80.700" y="706.6" width="2.200" height="1.200" fill="#9a9a9a"/>
<rect x="80.700" y="725.5" width="2.200" height="1.200" fill="#9a9a9a"/>
<rect x="80.700" y="744.4" width="2.200" height="1.200" fill="#9a9a9a"/>
<rect x="80.700" y="763.2" width="2.200" height="1.200" fill="#9a9a9a"/>
<rect x="80.700" y="782.1" width="2.200" height="1.200" fill="#9a9a9a"/>
<rect x="80.700" y="800.9" width="2.200" height="1.200" fill="#9a9a9a"/>
<rect x="80.700" y="819.8" width="2.200" height="1.200" fill="#9a9a9a"/>
<rect x="80.700" y="838.6" width="2.200" height="1.200" fill="#9a9a9a"/>
<rect x="80.700" y="857.5" width="2.200" height="1.200" fill="#9a9a9a"/>
<rect x="80.700" y="876.4" width="2.200" height="1.200" fill="#9a9a9a"/>
<rect x="80.700" y="895.2" width="2.200" height="1.200" fill="#9a9a9a"/>
<rect x="80.700" y="914.1" width="2.200" height="1.200" fill="#9a9a9a"/>
<rect x="80.700" y="932.9" width="2.200" height="1.200" fill="#9a9a9a"/>
<rect x="80.700" y="951.8" width="2.200" height="1.200" fill="#9a9a9a"/>
<rect x="77.400" y="244.600" width="8" height="1.500" fill="#5a5a5a"/>
<path d="M26.800 228.800l5.600 5.200-5.600 5.200" fill="none" stroke="#6e6e6e" stroke-width="3"/>
<path d="M1979.5 212h12l-6-6z" fill="#777"/>
<path d="M1979.5 875h12l-6 6z" fill="#777"/>
<path d="M1979.5 904.5h12l-6-6zM1979.5 911h12l-6-6z" fill="#777"/>
<path d="M1979.5 925.5h12l-6 6zM1979.5 932h12l-6 6z" fill="#777"/>
<g fill="none" stroke="#6a6a6a" stroke-width="1.300"><path d="M152.400 1005.300V988c-2-.800-5-.800-9-.500v16c4-.300 7-.300 9 .500 2-.800 5-.800 9.600-.500v-4.500M152.400 988c2-.800 5-.800 9.600-.500v4"/><path d="M155.400 996.600l3 2.900 5.700-6" stroke-width="2.300"/></g>
<g fill="none" stroke="#6a6a6a" stroke-width="1.400"><path d="M1106.500 995.800h17.200M1106.500 999.600h17.200M1106.500 1004.100h10.500"/></g><path d="M1110.300 993h9.400l-4.700-4.800z" fill="#6a6a6a"/>
<path d="M1197 986.5h22v14.5h-22z" fill="#595959"/><path d="M1199 1005.5h8" stroke="#595959" stroke-width="1.8"/><circle cx="1214" cy="1003" r="5.6" fill="#595959" stroke="#f3f3f3" stroke-width="1.2"/><circle cx="1214" cy="1003" r="2" fill="#f3f3f3"/><g stroke="#595959" stroke-width="2.4"><path d="M1214 995.5v15M1206.5 1003h15M1208.7 997.7l10.6 10.6M1219.3 997.7l-10.6 10.6"/></g><circle cx="1214" cy="1003" r="4.2" fill="#595959"/><circle cx="1214" cy="1003" r="1.9" fill="#f3f3f3"/>
<path d="M1329 988a1.5 1.5 0 0 1 1.5-1.5h19a1.5 1.5 0 0 1 1.5 1.5v12a1.5 1.5 0 0 1-1.5 1.5h-13l-3.5 5v-5h-2.500a1.5 1.5 0 0 1-1.5-1.5z" fill="#595959"/>
<g fill="none" stroke="#6a6a6a" stroke-width="1.3"><rect x="1456.500" y="987.5" width="19" height="17"/><path d="M1461 987.5v17M1461 999.5h14.500"/><rect x="1465.500" y="991" width="5.500" height="4.500"/></g>
<g fill="none" stroke="#6a6a6a" stroke-width="1.3"><rect x="1519.5" y="987" width="7.500" height="7"/><rect x="1530.500" y="987" width="7.500" height="7"/><rect x="1519.5" y="998" width="7.500" height="7"/><rect x="1530.500" y="998" width="7.500" height="7"/></g>
<g fill="none" stroke="#6a6a6a" stroke-width="1.3"><path d="M1591 988.5c-3-1.500-6-1.500-9.500-1v16.500c3.500-.5 6.500-.5 9.500 1 3-1.500 6-1.500 9.500-1v-16.500c-3.500-.5-6.500-.5-9.500 1zv16.500"/><path d="M1584 991.5h4.500M1584 995h4.500M1584 998.500h4.500M1593.500 991.5h4.500M1593.500 995h4.500M1593.500 998.500h4.500" stroke-width="1"/></g>
<g fill="none" stroke="#6a6a6a" stroke-width="1.3"><path d="M1644 987h19.500M1646 987v11.500h15.500v-11.500M1653.700 998.500v6M1649.500 1004.500h8.500M1650 991.500h8"/></g>
<path d="M1694 997h12" stroke="#555" stroke-width="1.5"/>
<path d="M1715 997h153" stroke="#a6a6a6" stroke-width="1.6"/>
<path d="M1791.5 993v8.500" stroke="#a6a6a6" stroke-width="1.6"/>
<rect x="1758.500" y="987.500" width="8" height="17.500" fill="#6a6a6a"/>
<path d="M1877 997h12M1883 991v12" stroke="#555" stroke-width="1.5"/>
<g fill="none" stroke="#6a6a6a" stroke-width="1.2"><rect x="1974.500" y="989.500" width="14.500" height="14.500"/><path d="M1981.700 989.500v4M1981.700 1004v-4M1974.500 996.700h4M1989 996.700h-4"/></g>
<g fill="none" stroke="#6a6a6a" stroke-width="1.3"><path d="M133.5 187.5v-9.5h9.5"/><path d="M137 182l6.5 6.5m0-5v5h-5"/></g>
<g fill="none" stroke="#6a6a6a" stroke-width="1.3"><path d="M768.5 187.5v-9.5h9.5"/><path d="M772 182l6.5 6.5m0-5v5h-5"/></g>
<g fill="none" stroke="#6a6a6a" stroke-width="1.3"><path d="M1232.5 187.5v-9.5h9.5"/><path d="M1236 182l6.5 6.5m0-5v5h-5"/></g>
<g fill="none" stroke="#6a6a6a" stroke-width="1.3"><path d="M1803.5 187.5v-9.5h9.5"/><path d="M1807 182l6.5 6.5m0-5v5h-5"/></g>
<path d="M1971 190.5l8-8 8 8" fill="none" stroke="#555" stroke-width="1.700"/>
<rect x="30" y="67.500" width="35" height="38.500" rx="2" fill="#eec67a"/>
<path d="M36 68.200h23v5.200h-23z" fill="#808080" stroke="#f3f3f3" stroke-width="1.200"/><path d="M43 62.600h9v6.500h-9z" fill="#808080"/><circle cx="47.500" cy="65.700" r="1.400" fill="#f3f3f3"/>
<path d="M51.800 80.800h14.300l6.200 6.200v21.500h-20.500z" fill="#fff" stroke="#8a8a8a" stroke-width="1.300"/><path d="M66.100 80.800v6.200h6.200" fill="#e8e8e8" stroke="#8a8a8a" stroke-width="1.100"/>
<path d="M47.5 146.7h8l-4 4.2z" fill="#6a6a6a"/>
<g fill="none" stroke="#4a7ebb" stroke-width="1.700"><circle cx="94.500" cy="80" r="3.600"/><circle cx="105.600" cy="80" r="3.600"/></g>
<path d="M93.500 61.800L95.800 62.800L104.700 75.300L102.300 76.900L94.400 66.300Z" fill="#6a6a6a"/><path d="M106.400 61.800L104.100 62.800L95.200 75.300L97.600 76.900L105.500 66.300Z" fill="#6a6a6a"/>
<path d="M90.8 98.5h6.6l4.2 4.2v10.8h-10.8z" fill="#fff" stroke="#8a8a8a" stroke-width="1.200"/><path d="M97.4 98.5v4.2h4.2" fill="none" stroke="#8a8a8a" stroke-width="1"/><path d="M93 103.8h3.8" stroke="#4a7ebb" stroke-width="1.300"/><path d="M93 106.8h6.4" stroke="#4a7ebb" stroke-width="1.300"/><path d="M93 109.8h6.4" stroke="#4a7ebb" stroke-width="1.300"/>
<path d="M100.6 105.5h6.6l4.2 4.2v10.8h-10.8z" fill="#fff" stroke="#8a8a8a" stroke-width="1.200"/><path d="M107.2 105.5v4.2h4.2" fill="none" stroke="#8a8a8a" stroke-width="1"/><path d="M102.8 110.8h3.8" stroke="#4a7ebb" stroke-width="1.300"/><path d="M102.8 113.8h6.4" stroke="#4a7ebb" stroke-width="1.300"/><path d="M102.8 116.8h6.4" stroke="#4a7ebb" stroke-width="1.300"/>
<path d="M123.7 108.2h8l-4 4.2z" fill="#6a6a6a"/>
<g fill="#c9c4c9"><path d="M89.700 146.500l9.500-5.500 7 8-7.500 7z" fill="#d8d3d8"/><path d="M98.500 141.500l3.500-3.300 7.200 8-3.500 3.200z" fill="#b5b0b5"/><path d="M104.500 139l6-4.200 2.300 2.600-5.500 4.800z" fill="#bdb8bd"/></g>
<rect x="180.100" y="66.800" width="43.600" height="34.800" rx="2.500" fill="#fff" stroke="#8a8a8a" stroke-width="1.300"/>
<rect x="186.600" y="72.900" width="31.400" height="9" fill="#d2d2d2"/>
<g stroke="#c8c8c8" stroke-width="1.100"><path d="M186.600 89.200h1.800M190.900 89.200h27.100M186.600 93.200h1.800M190.900 93.200h27.100"/></g>
<g stroke="#efc56d" stroke-width="2.2"><path d="M186.62 67.60L192.50 67.60"/><path d="M185.88 69.38L190.04 73.54"/><path d="M184.10 70.12L184.10 76.00"/><path d="M182.32 69.38L178.16 73.54"/><path d="M181.58 67.60L175.70 67.60"/><path d="M182.32 65.82L178.16 61.66"/><path d="M184.10 65.08L184.10 59.20"/><path d="M185.88 65.82L190.04 61.66"/></g><circle cx="184.1" cy="67.6" r="2.02" fill="#fdf8ec"/>
<path d="M227.6 146.5h8l-4 4.2z" fill="#6a6a6a"/>
<rect x="244.600" y="63" width="23.700" height="19.700" rx="1" fill="#fff" stroke="#8a8a8a" stroke-width="1.300"/>
<rect x="247.400" y="65.700" width="18.300" height="4" fill="#d2d2d2"/><rect x="247.400" y="72.400" width="7" height="7.300" fill="#d2d2d2"/><path d="M256.500 72.900h9.200M256.500 75.900h9.200M256.500 78.900h6" stroke="#bdbdbd" stroke-width="1"/>
<path d="M349.6 71.7h8l-4 4.2z" fill="#6a6a6a"/>
<rect x="246.800" y="101.600" width="21.500" height="17.800" rx="1" fill="#fff" stroke="#8a8a8a" stroke-width="1.300"/>
<rect x="249.200" y="108.500" width="7" height="8" fill="#d2d2d2"/><path d="M258.300 104.800h8M258.300 108h8M258.300 111.200h8M258.300 114.400h5" stroke="#c4c4c4" stroke-width="1.100"/>
<path d="M246.500 106.500a6 6 0 0 1 11.500 -2" fill="none" stroke="#f3f3f3" stroke-width="4.500"/><path d="M246.800 106.200a6 6 0 0 1 11.300 -2.200" fill="none" stroke="#4a7ebb" stroke-width="2.200"/><path d="M243.800 102.500l.2 5.800 5.800-.3z" fill="#4a7ebb"/>
<g stroke="#efc56d" stroke-width="1.4"><path d="M249.84 138.00L253.20 138.00"/><path d="M249.42 139.02L251.79 141.39"/><path d="M248.40 139.44L248.40 142.80"/><path d="M247.38 139.02L245.01 141.39"/><path d="M246.96 138.00L243.60 138.00"/><path d="M247.38 136.98L245.01 134.61"/><path d="M248.40 136.56L248.40 133.20"/><path d="M249.42 136.98L251.79 134.61"/></g><circle cx="248.4" cy="138" r="1.15" fill="#fdf8ec"/>
<path d="M253.500 138.300h13.500v3.600h-13.500" fill="none" stroke="#e97a31" stroke-width="1.500"/>
<rect x="252.700" y="145.500" width="14.800" height="11.200" rx=".8" fill="#fff" stroke="#8a8a8a" stroke-width="1.300"/><rect x="255.200" y="148.300" width="9.800" height="3" fill="#d2d2d2"/>
<path d="M346.7 144.9h8l-4 4.2z" fill="#6a6a6a"/>
<rect x="392" y="68.500" width="182.500" height="35" fill="#fff" stroke="#ababab" stroke-width="1.200"/>
<rect x="574.500" y="68.500" width="90" height="35" fill="#fff" stroke="#ababab" stroke-width="1.200"/>
<path d="M549 82.500l9.700 10 9.700-10" fill="none" stroke="#333" stroke-width="1.500"/>
<path d="M638.500 82.500l9.700 10 9.700-10" fill="none" stroke="#333" stroke-width="1.500"/>
<path d="M684.200 78h7l-3.500-3.800z" fill="#4a7ebb"/><path d="M717.700 74.500h7l-3.500 3.800z" fill="#4a7ebb"/>
<path d="M755.500 88.500l8.500-8.300 5.500 5.200-8.500 8.500z" fill="#e8849a"/><path d="M753.200 90.800l2.300-2.300 5.500 5.400-2.300 2.300z" fill="#f2b3c0"/>
<path d="M467.500 143.200h14" stroke="#444" stroke-width="1.500"/>
<path d="M528 134.300h26.500" stroke="#555" stroke-width="1.200"/>
<path d="M564 141.200h22M567.500 138l-3.500 3.200 3.500 3.200M582.500 138l3.500 3.200-3.500 3.200" fill="none" stroke="#4a7ebb" stroke-width="1.400"/>
<path d="M593.5 131.4h8l-4 4.2z" fill="#6a6a6a"/>
<path d="M643.5 131.4h8l-4 4.2z" fill="#6a6a6a"/>
<path d="M679 138.500l13.500-13 3 3-13 13.500-4.500 1z" fill="#6a6a6a"/>
<rect x="672" y="139.800" width="25" height="6" fill="#ffff00"/>
<path d="M706.5 131.4h8l-4 4.2z" fill="#6a6a6a"/>
<rect x="725" y="139.800" width="25" height="6" fill="#d0d0d0"/>
<path d="M759.5 131.4h8l-4 4.2z" fill="#6a6a6a"/>
<circle cx="806.500" cy="76.2" r="2.300" fill="#4a7ebb"/><circle cx="806.500" cy="85" r="2.300" fill="#4a7ebb"/><circle cx="806.500" cy="93.8" r="2.300" fill="#4a7ebb"/>
<path d="M813 76.2H827M813 85H827M813 93.8H827" stroke="#5f5f5f" stroke-width="1.3" fill="none"/>
<path d="M838 84.2h8l-4 4.2z" fill="#6a6a6a"/>
<path d="M865.5 76.2H880M865.5 85H880M865.5 93.8H880" stroke="#5f5f5f" stroke-width="1.3" fill="none"/>
<path d="M891 84.2h8l-4 4.2z" fill="#6a6a6a"/>
<path d="M920 74.2H943.5M920 96H943.5" stroke="#bcbcbc" stroke-width="1.3" fill="none"/><path d="M933 79.6H943.5M933 85H943.5M933 90.4H943.5" stroke="#bcbcbc" stroke-width="1.3" fill="none"/>
<path d="M920 85h10M924.500 80.800l-4.300 4.200 4.300 4.200" fill="none" stroke="#bcbcbc" stroke-width="1.800"/>
<path d="M953 74.2H976.5M953 96H976.5" stroke="#bcbcbc" stroke-width="1.3" fill="none"/><path d="M966 79.6H976.5M966 85H976.5M966 90.4H976.5" stroke="#bcbcbc" stroke-width="1.3" fill="none"/>
<path d="M953 85h10M958.500 80.800l4.300 4.200-4.300 4.200" fill="none" stroke="#bcbcbc" stroke-width="1.800"/>
<path d="M1000 74v22M996.200 78l3.800-4.200 3.800 4.200M996.200 92l3.800 4.200 3.800-4.200" fill="none" stroke="#4a7ebb" stroke-width="1.700"/>
<path d="M1006 78H1019M1006 82.7H1019M1006 87.4H1019" stroke="#5f5f5f" stroke-width="1.3" fill="none"/><path d="M1006 92.1H1015" stroke="#5f5f5f" stroke-width="1.3" fill="none"/>
<path d="M1025.5 84.2h8l-4 4.2z" fill="#6a6a6a"/>
<path d="M805 123.7H826M805 133.7H826M805 143.7H826" stroke="#5f5f5f" stroke-width="1.3" fill="none"/><path d="M805 128.7H819.5M805 138.7H819.5" stroke="#5f5f5f" stroke-width="1.3" fill="none"/>
<path d="M838.5 123.7H860M838.5 133.7H860M838.5 143.7H860" stroke="#5f5f5f" stroke-width="1.3" fill="none"/><path d="M842 128.7H856.5M842 138.7H856.5" stroke="#5f5f5f" stroke-width="1.3" fill="none"/>
<path d="M872 123.7H893M872 133.7H893M872 143.7H893" stroke="#5f5f5f" stroke-width="1.3" fill="none"/><path d="M878.5 128.7H893M878.5 138.7H893" stroke="#5f5f5f" stroke-width="1.3" fill="none"/>
<path d="M905 123.7H926.5M905 128.7H926.5M905 133.7H926.5M905 138.7H926.5M905 143.7H926.5" stroke="#5f5f5f" stroke-width="1.3" fill="none"/>
<path d="M941 128.7H957M941 133.7H957M941 138.7H957M941 143.7H957" stroke="#5f5f5f" stroke-width="1.3" fill="none"/>
<path d="M937.700 122.500v22.500M960.500 122.500v22.500M940.500 124.500h17M944 121.300l-3.500 3.200 3.500 3.200M954 121.300l3.500 3.200-3.500 3.200" fill="none" stroke="#4a7ebb" stroke-width="1.400"/>
<path d="M980 123.7H989.5M980 128.7H989.5M980 133.7H989.5M980 138.7H989.5M980 143.7H989.5" stroke="#4a7ebb" stroke-width="1.3" fill="none"/><path d="M992.5 123.7H1002M992.5 128.7H1002M992.5 133.7H1002M992.5 138.7H1002M992.5 143.7H1002" stroke="#4a7ebb" stroke-width="1.3" fill="none"/>
<path d="M1010 132.2h8l-4 4.2z" fill="#6a6a6a"/>
<path d="M1047 62v22M1053.300 62v22M1059.600 72v12M1065.900 72v12M1044.800 81l2.200 3 2.200-3M1051.100 81l2.200 3 2.200-3M1057.400 81l2.200 3 2.200-3M1063.700 81l2.200 3 2.200-3" fill="none" stroke="#5f5f5f" stroke-width="1.200"/>
<path d="M1190 72.2h8l-4 4.2z" fill="#6a6a6a"/>
<path d="M1051 98.500h-6v21.500h6M1063 98.500h6v21.500h-6" fill="none" stroke="#5f5f5f" stroke-width="1.300"/>
<path d="M1050 107.5H1064M1050 110.5H1064" stroke="#9a9a9a" stroke-width="1.1" fill="none"/>
<path d="M1057 97.500v7.500M1053.500 101l3.500-3.700 3.500 3.700M1057 113.500v7.500M1053.500 117.500l3.500 3.700 3.500-3.700" fill="none" stroke="#4a7ebb" stroke-width="1.600"/>
<path d="M1171.5 108.2h8l-4 4.2z" fill="#6a6a6a"/>
<path d="M1044.500 138h17l4.500 4.500-4.500 4.500h-17l4-4.500z" fill="#c4c4c4"/><rect x="1054.500" y="144.500" width="15" height="11" fill="#fbf3f8" stroke="#c0c0c0" stroke-width="1.200"/><path d="M1057.500 148.500h9M1057.500 152h9" stroke="#d0c4cc" stroke-width="1"/>
<path d="M1221 145.2h8l-4 4.2z" fill="#c4c4c4"/>
<rect x="1263.600" y="59.500" width="215" height="96" fill="#fff" stroke="#d0d0d0" stroke-width="1.200"/>
<path d="M1453.500 60h24.600v32h-24.600zM1453.500 93h24.600v30h-24.600zM1453.500 124h24.600v31h-24.600z" fill="#f3f3f3" stroke="#c6c6c6" stroke-width="1"/>
<path d="M1456 80.500l9.800-9 9.800 9" fill="none" stroke="#b8b8b8" stroke-width="1.300"/>
<path d="M1456 103.500l9.800 9 9.800-9" fill="none" stroke="#333" stroke-width="1.400"/>
<path d="M1455 129.500h21.500M1456 136.500l9.800 9 9.800-9" fill="none" stroke="#333" stroke-width="1.400"/>
<rect x="1268.500" y="66.500" width="22.500" height="18" fill="#fff" stroke="#5f5f5f" stroke-width="1.200"/><path d="M1282.500 70h6.500M1282.500 73.500h6.500M1282.500 77h6.500M1271.500 80.500h17.500" stroke="#8a8a8a" stroke-width="1"/><rect x="1299.500" y="66.500" width="22.500" height="18" fill="#fff" stroke="#5f5f5f" stroke-width="1.200"/><path d="M1303 69.500v12.500M1306 69.500v12.500M1309 69.500v12.500M1312.500 79v3M1315.500 79v3M1318.500 79v3" stroke="#8a8a8a" stroke-width="1"/><path d="M1332.500 66.500l20 19.500" stroke="#5f5f5f" stroke-width="1.200"/><path d="M1363.500 66.500l21.500 20.500M1380 86.800l5 .2-.2-5" fill="none" stroke="#5f5f5f" stroke-width="1.200"/><rect x="1394.500" y="68.500" width="21.500" height="15" fill="none" stroke="#5f5f5f" stroke-width="1.200"/><ellipse cx="1436.500" cy="75.800" rx="11" ry="7.800" fill="none" stroke="#5f5f5f" stroke-width="1.200"/><rect x="1269.500" y="99.500" width="21.500" height="15.500" rx="3.500" fill="none" stroke="#5f5f5f" stroke-width="1.200"/><path d="M1311 97.500l9 20.500h-18z" fill="none" stroke="#5f5f5f" stroke-width="1.200"/><path d="M1332 98.500h10v16.500h11.500" fill="none" stroke="#5f5f5f" stroke-width="1.200"/><path d="M1363 98.500h10v16.500h12M1381 111l4.200 4-4.200 4" fill="none" stroke="#5f5f5f" stroke-width="1.200"/><path d="M1394.500 103.500h10v-6l10.500 10-10.500 10v-6h-10z" fill="none" stroke="#5f5f5f" stroke-width="1.200"/><path d="M1431 97h8v10h6l-10 10.500-10-10.500h6z" fill="none" stroke="#5f5f5f" stroke-width="1.200"/><path d="M1269.400 136.400L1274.300 129.900H1286.400C1282.500 132 1280.500 135 1282.500 137C1284.500 139 1291.400 136.500 1291.400 140.500V143.200L1288 147.400H1269.400Z" fill="none" stroke="#5f5f5f" stroke-width="1.300" stroke-linejoin="round"/><path d="M1308.400 126.500C1308 130 1303 133 1304.500 136C1306 139 1314 132 1316.500 134.500C1319 137.500 1309 141.500 1311 145C1313 148.500 1318.500 146 1317.500 143.500C1316.500 141 1311.500 143.500 1313 146.500C1314 148.500 1316 149 1317.500 150" fill="none" stroke="#5f5f5f" stroke-width="1.400"/><path d="M1331.500 130.500c12-1 21 6 22 18" fill="none" stroke="#5f5f5f" stroke-width="1.200"/><path d="M1362 143c3-16 8-16 11.500-5 3.500 11 8 11 12.500 8.500" fill="none" stroke="#5f5f5f" stroke-width="1.200"/>
<rect x="1502.100" y="71" width="26.100" height="25.800" fill="#eec67a"/>
<rect x="1494.500" y="63" width="19" height="18.800" fill="#fff" stroke="#9a9a9a" stroke-width="1.300"/><rect x="1517.300" y="85.800" width="19" height="18.800" fill="#fff" stroke="#9a9a9a" stroke-width="1.300"/>
<path d="M1515.5 146.5h8l-4 4.2z" fill="#6a6a6a"/>
<rect x="1566" y="63.700" width="39.500" height="39.800" rx="8" fill="#fff" stroke="#9a9a9a" stroke-width="1.300"/>
<path d="M1611.400 75.800L1611.700 86.500L1603.200 93.800L1598.800 89.200Z" fill="#808080"/><path d="M1598.300 89.800L1602.600 94.400L1598.600 98.500L1594.600 94.300Z" fill="#808080" stroke="#fff" stroke-width=".800"/>
<path d="M1576.800 108.900C1585 106 1586.500 100.500 1589.500 97.600C1592.500 94.800 1596.800 95.300 1598.600 98.300C1600.400 101.500 1598 105.800 1592.500 107.500C1587 109.200 1581 109.100 1576.800 108.900Z" fill="#4a7ebb" stroke="#f3f3f3" stroke-width=".600"/><path d="M1588.300 99.500C1590.500 97 1594.500 96.800 1596.300 99C1597.800 101 1597 103.500 1594.800 105" fill="none" stroke="#fff" stroke-width="1.500"/>
<path d="M1614.4 146.5h8l-4 4.2z" fill="#6a6a6a"/>
<rect x="1630.600" y="78.700" width="24" height="5.300" fill="#fff" stroke="#9a9a9a" stroke-width="1.200"/>
<path d="M1642.500 62l8.500 8-8.500 8-8.200-8z" fill="#fff" stroke="#5f5f5f" stroke-width="1.200"/><path d="M1643.800 66.500v-5.500a2.200 2.200 0 0 0-4.400 0v3" fill="none" stroke="#5f5f5f" stroke-width="1.100"/><circle cx="1643.800" cy="67" r="1.200" fill="#5f5f5f"/><path d="M1650 66c3.500 1.500 4.200 6 2 10.500-.3-3-1.500-5-3.300-6.500z" fill="#4a7ebb"/>
<path d="M1793.5 71.2h8l-4 4.2z" fill="#6a6a6a"/>
<path d="M1647.500 96.500h-16.800v15.700h6" fill="none" stroke="#8a8a8a" stroke-width="1.100"/>
<path d="M1651.500 96.200l2.700 2.500-13.500 13-4 1.300 1.300-4z" fill="#4a7ebb"/><path d="M1649.600 98l2.700 2.600" stroke="#f3f3f3" stroke-width=".9"/>
<rect x="1630.100" y="113.400" width="25" height="6.400" fill="#ff0000"/>
<path d="M1757.5 106.2h8l-4 4.2z" fill="#6a6a6a"/>
<path d="M1637 134h14.500c2.500 0 4 1.800 3.300 4l-3.300 10.500c-.5 2-2 3.500-4.500 3.500h-14c-2.500 0-3.500-1.500-2.500-4l3.500-11c.5-2 1.500-3 3-3z" fill="#8e8e8e"/><path d="M1637.500 133.300h13c2 0 3 1.300 2.400 3l-2.900 8.500c-.5 1.500-1.500 2.500-3.500 2.500h-13c-2 0-2.800-1.200-2-3l3.200-8.500c.5-1.500 1.300-2.500 2.800-2.500z" fill="#fff" stroke="#9a9a9a" stroke-width=".8"/>
<path d="M1757.5 141.7h8l-4 4.2z" fill="#6a6a6a"/>
<circle cx="1852.500" cy="69.500" r="6.300" fill="none" stroke="#4a7ebb" stroke-width="2"/><path d="M1848 74.500l-6.500 7" stroke="#4a7ebb" stroke-width="2.800" stroke-linecap="round"/>
<path d="M1840 109v3.500h4.500M1842.500 110.500l2.300 2-2.300 2" fill="none" stroke="#4a7ebb" stroke-width="1.200"/>
<path d="M1919.5 106.2h8l-4 4.2z" fill="#6a6a6a"/>
<path d="M1844.500 132.500v19l4.500-4 3.300 7.300 2.600-1.200-3.300-7h6z" fill="#fff" stroke="#5f5f5f" stroke-width="1.200" stroke-linejoin="round"/>
<path d="M1911.5 141.7h8l-4 4.2z" fill="#6a6a6a"/>
<g fill="none" stroke="#fff" stroke-width="1.600"><path d="M1149.500 33.500c0-3-4-5.500-4-10a8 8 0 0 1 16 0c0 4.500-4 7-4 10z"/><path d="M1150 36.500h7M1151 39.300h5" stroke-width="1.400"/></g>
<g fill="none" stroke="#fff" stroke-width="1.600"><circle cx="1908.600" cy="26.700" r="7.200"/><path d="M1898 41.500c1-6 5-9.500 10.500-10M1909.500 37.400h11.500M1915.200 31.800v11.200"/></g>
</svg>
<span class="t" style="left:18.49px;top:19.80px;font-size:17.9px;color:#ffffff;transform:scaleX(0.7536);">ファイル</span>
<span class="t" style="left:111.12px;top:19.80px;font-size:17.9px;color:#b7472a;transform:scaleX(0.9400);">ホーム</span>
<span class="t" style="left:199.91px;top:19.80px;font-size:17.9px;color:#ffffff;transform:scaleX(1.0882);">挿入</span>
<span class="t" style="left:278.14px;top:19.80px;font-size:17.9px;color:#ffffff;transform:scaleX(0.8551);">デザイン</span>
<span class="t" style="left:377.04px;top:19.80px;font-size:17.9px;color:#ffffff;transform:scaleX(0.9590);">画面切り替え</span>
<span class="t" style="left:518.95px;top:19.80px;font-size:17.9px;color:#ffffff;transform:scaleX(0.7769);">アニメーション</span>
<span><span class="t" style="left:653.86px;top:19.80px;font-size:17.9px;color:#ffffff;transform:scaleX(0.8209);">スライド</span> <span class="t" style="left:716.00px;top:19.80px;font-size:17.9px;color:#ffffff;transform:scaleX(0.7500);">ショー</span></span>
<span class="t" style="left:796.43px;top:19.80px;font-size:17.9px;color:#ffffff;transform:scaleX(1.0735);">校閲</span>
<span class="t" style="left:873.93px;top:19.80px;font-size:17.9px;color:#ffffff;transform:scaleX(1.0735);">表示</span>
<span class="t" style="left:951.23px;top:19.80px;font-size:17.9px;color:#ffffff;transform:scaleX(0.8846);">ヘルプ</span>
<span class="t" style="left:1050.89px;top:19.80px;font-size:17.9px;color:#ffffff;transform:scaleX(1.1059);">書式</span>
<span class="t" style="left:1182.02px;top:19.80px;font-size:17.9px;color:#ffffff;transform:scaleX(0.9792);">希望する作業を入力</span>
<span class="t" style="left:1927.91px;top:19.80px;font-size:17.9px;color:#ffffff;transform:scaleX(1.0882);">共有</span>
<span><span class="t" style="left:9.60px;top:989.30px;font-size:17.9px;color:#3b3b3b;transform:scaleX(0.8000);">スライド</span> <span class="t" style="left:70.66px;top:987.80px;font-size:20px;color:#3b3b3b;transform:scaleX(1.1351);">6/15</span></span>
<span class="t" style="left:189.48px;top:989.50px;font-size:17.9px;color:#3b3b3b;transform:scaleX(1.0740);">日本語</span>
<span class="t" style="left:1129.12px;top:989.50px;font-size:17.9px;color:#3b3b3b;transform:scaleX(0.8604);">ノート</span>
<span class="t" style="left:1223.35px;top:989.50px;font-size:17.9px;color:#3b3b3b;transform:scaleX(1.0514);">表示設定</span>
<span class="t" style="left:1352.45px;top:989.50px;font-size:17.9px;color:#3b3b3b;transform:scaleX(0.7848);">コメント</span>
<span class="t" style="left:1907.64px;top:988.00px;font-size:20.5px;color:#3b3b3b;transform:scaleX(1.0590);">64%</span>
<span class="t" style="left:13.46px;top:175.10px;font-size:17.9px;color:#262626;transform:scaleX(0.7686);">クリップボード</span>
<span class="t" style="left:234.36px;top:175.10px;font-size:17.9px;color:#262626;transform:scaleX(0.8209);">スライド</span>
<span class="t" style="left:541.45px;top:175.10px;font-size:17.9px;color:#262626;transform:scaleX(0.7761);">フォント</span>
<span class="t" style="left:984.94px;top:175.10px;font-size:17.9px;color:#262626;transform:scaleX(1.0588);">段落</span>
<span class="t" style="left:1483.96px;top:175.10px;font-size:17.9px;color:#262626;transform:scaleX(1.0429);">図形描画</span>
<span class="t" style="left:1864.00px;top:175.10px;font-size:17.9px;color:#262626;transform:scaleX(1.0571);">編集</span>
<span class="t" style="left:15.08px;top:118.10px;font-size:17.9px;color:#262626;transform:scaleX(0.9188);">貼り付け</span>
<span class="t" style="left:176.47px;top:118.10px;font-size:17.9px;color:#262626;transform:scaleX(0.9275);">新しい</span>
<span class="t" style="left:165.41px;top:141.80px;font-size:17.9px;color:#262626;transform:scaleX(0.7940);">スライド</span>
<span class="t" style="left:269.98px;top:66.80px;font-size:17.9px;color:#262626;transform:scaleX(0.8301);">レイアウト</span>
<span class="t" style="left:270.23px;top:103.50px;font-size:17.9px;color:#262626;transform:scaleX(0.7677);">リセット</span>
<span class="t" style="left:273.15px;top:139.30px;font-size:17.9px;color:#262626;transform:scaleX(0.7483);">セクション</span>
<span><span class="t" style="left:394.49px;top:78.00px;font-size:20.5px;color:#262626;transform:scaleX(1.0060);">Meiryo UI</span> <span class="t" style="left:488.03px;top:78.50px;font-size:19.5px;color:#262626;transform:scaleX(0.9730);">本文</span></span>
<span class="t" style="left:579.48px;top:78.00px;font-size:20.5px;color:#262626;transform:scaleX(1.0152);">18+</span>
<span class="t" style="left:671.00px;top:75.00px;font-size:24px;color:#4d4d4d;transform:scaleX(1.0187);">A</span>
<span class="t" style="left:705.00px;top:79.30px;font-size:20px;color:#4d4d4d;transform:scaleX(1.0385);">A</span>
<span class="t" style="left:749.50px;top:72.50px;font-size:15px;color:#555;transform:scaleX(1.0500);">A</span>
<span class="t" style="left:400.57px;top:122.50px;font-size:22px;color:#444;transform:scaleX(0.9286);font-weight:700;">B</span>
<span class="t" style="left:435.00px;top:123.00px;font-size:22.5px;color:#444;transform:scaleX(1.0000);font-style:italic;font-weight:700;font-family:'Liberation Serif',serif;">I</span>
<span class="t" style="left:465.92px;top:121.50px;font-size:21px;color:#444;transform:scaleX(1.0417);">U</span>
<span class="t" style="left:501.08px;top:122.50px;font-size:22px;color:#444;transform:scaleX(0.9231);font-weight:700;text-shadow:1.500px 1.500px 1.500px #999;">S</span>
<span class="t" style="left:527.98px;top:127.00px;font-size:16px;color:#555;transform:scaleX(1.0208);">abc</span>
<span class="t" style="left:564.50px;top:121.50px;font-size:15.5px;color:#444;transform:scaleX(1.0250);">AV</span>
<span class="t" style="left:613.50px;top:124.00px;font-size:20.5px;color:#555;transform:scaleX(0.9600);">Aa</span>
<span class="t" style="left:671.46px;top:120.00px;font-size:13.5px;color:#555;transform:scaleX(1.0357);">ab</span>
<span class="t" style="left:729.50px;top:118.00px;font-size:25px;color:#555;transform:scaleX(1.0000);">A</span>
<span class="t" style="left:857.00px;top:72.20px;font-size:8.5px;color:#4a7ebb;transform:scaleX(0.8000);font-weight:700;">1</span>
<span class="t" style="left:857.00px;top:81.00px;font-size:8.5px;color:#4a7ebb;transform:scaleX(0.8000);font-weight:700;">2</span>
<span class="t" style="left:857.00px;top:89.80px;font-size:8.5px;color:#4a7ebb;transform:scaleX(0.8000);font-weight:700;">3</span>
<span class="t" style="left:1058.50px;top:58.80px;font-size:16.5px;color:#4a7ebb;transform:scaleX(0.8917);font-weight:700;">A</span>
<span class="t" style="left:1073.97px;top:67.20px;font-size:17.9px;color:#262626;transform:scaleX(1.0286);">文字列の方向</span>
<span class="t" style="left:1073.99px;top:103.20px;font-size:17.9px;color:#262626;transform:scaleX(1.0114);">文字の配置</span>
<span><span class="t" style="left:1074.46px;top:138.20px;font-size:19.5px;color:#b5b5b5;transform:scaleX(1.0382);">SmartArt</span> <span class="t" style="left:1159.56px;top:139.70px;font-size:17.9px;color:#b5b5b5;transform:scaleX(1.0176);">に変換</span></span>
<span class="t" style="left:1271.50px;top:68.20px;font-size:10.5px;color:#4a7ebb;transform:scaleX(1.0000);font-weight:700;">A</span>
<span class="t" style="left:1312.50px;top:68.20px;font-size:10.5px;color:#4a7ebb;transform:scaleX(1.0000);font-weight:700;">A</span>
<span class="t" style="left:1402.00px;top:127.50px;font-size:21.5px;color:#555;transform:scaleX(1.0714);">{</span>
<span class="t" style="left:1432.50px;top:127.50px;font-size:21.5px;color:#555;transform:scaleX(1.0714);">}</span>
<span class="t" style="left:1496.43px;top:118.10px;font-size:17.9px;color:#262626;transform:scaleX(1.0676);">配置</span>
<span class="t" style="left:1561.66px;top:118.10px;font-size:17.9px;color:#262626;transform:scaleX(0.7209);">クイック</span>
<span class="t" style="left:1549.63px;top:141.80px;font-size:17.9px;color:#262626;transform:scaleX(0.7855);">スタイル</span>
<span class="t" style="left:1659.09px;top:65.70px;font-size:17.9px;color:#262626;transform:scaleX(0.9071);">図形の塗りつぶし</span>
<span class="t" style="left:1658.98px;top:100.70px;font-size:17.9px;color:#262626;transform:scaleX(1.0227);">図形の枠線</span>
<span class="t" style="left:1658.98px;top:136.70px;font-size:17.9px;color:#262626;transform:scaleX(1.0227);">図形の効果</span>
<span class="t" style="left:1865.91px;top:66.00px;font-size:17.9px;color:#262626;transform:scaleX(1.0882);">検索</span>
<span class="t" style="left:1838.06px;top:95.50px;font-size:15.5px;color:#555;transform:scaleX(0.9375);">a</span>
<span class="t" style="left:1847.36px;top:95.50px;font-size:15.5px;color:#8557a8;transform:scaleX(1.1429);">b</span>
<span class="t" style="left:1845.47px;top:106.00px;font-size:15.5px;color:#4a7ebb;transform:scaleX(1.0333);">ac</span>
<span class="t" style="left:1865.91px;top:101.20px;font-size:17.9px;color:#262626;transform:scaleX(1.0882);">置換</span>
<span class="t" style="left:1865.91px;top:137.20px;font-size:17.9px;color:#262626;transform:scaleX(1.0882);">選択</span>
<span class="t" style="left:810.72px;top:240.70px;font-size:37.5px;color:#000;transform:scaleX(0.8909);font-weight:700;">グループ化が解除されました。</span>
<span class="rt" style="left:414.5px;top:202.5px;width:40px;text-align:center">16</span>
<span class="rt" style="left:452.2px;top:202.5px;width:40px;text-align:center">15</span>
<span class="rt" style="left:489.9px;top:202.5px;width:40px;text-align:center">14</span>
<span class="rt" style="left:527.6px;top:202.5px;width:40px;text-align:center">13</span>
<span class="rt" style="left:565.4px;top:202.5px;width:40px;text-align:center">12</span>
<span class="rt" style="left:603.1px;top:202.5px;width:40px;text-align:center">11</span>
<span class="rt" style="left:640.8px;top:202.5px;width:40px;text-align:center">10</span>
<span class="rt" style="left:678.5px;top:202.5px;width:40px;text-align:center">9</span>
<span class="rt" style="left:716.2px;top:202.5px;width:40px;text-align:center">8</span>
<span class="rt" style="left:754.0px;top:202.5px;width:40px;text-align:center">7</span>
<span class="rt" style="left:791.7px;top:202.5px;width:40px;text-align:center">6</span>
<span class="rt" style="left:829.4px;top:202.5px;width:40px;text-align:center">5</span>
<span class="rt" style="left:867.1px;top:202.5px;width:40px;text-align:center">4</span>
<span class="rt" style="left:904.8px;top:202.5px;width:40px;text-align:center">3</span>
<span class="rt" style="left:942.6px;top:202.5px;width:40px;text-align:center">2</span>
<span class="rt" style="left:980.3px;top:202.5px;width:40px;text-align:center">1</span>
<span class="rt" style="left:1018.0px;top:202.5px;width:40px;text-align:center">0</span>
<span class="rt" style="left:1055.7px;top:202.5px;width:40px;text-align:center">1</span>
<span class="rt" style="left:1093.4px;top:202.5px;width:40px;text-align:center">2</span>
<span class="rt" style="left:1131.2px;top:202.5px;width:40px;text-align:center">3</span>
<span class="rt" style="left:1168.9px;top:202.5px;width:40px;text-align:center">4</span>
<span class="rt" style="left:1206.6px;top:202.5px;width:40px;text-align:center">5</span>
<span class="rt" style="left:1244.3px;top:202.5px;width:40px;text-align:center">6</span>
<span class="rt" style="left:1282.0px;top:202.5px;width:40px;text-align:center">7</span>
<span class="rt" style="left:1319.8px;top:202.5px;width:40px;text-align:center">8</span>
<span class="rt" style="left:1357.5px;top:202.5px;width:40px;text-align:center">9</span>
<span class="rt" style="left:1395.2px;top:202.5px;width:40px;text-align:center">10</span>
<span class="rt" style="left:1432.9px;top:202.5px;width:40px;text-align:center">11</span>
<span class="rt" style="left:1470.6px;top:202.5px;width:40px;text-align:center">12</span>
<span class="rt" style="left:1508.4px;top:202.5px;width:40px;text-align:center">13</span>
<span class="rt" style="left:1546.1px;top:202.5px;width:40px;text-align:center">14</span>
<span class="rt" style="left:1583.8px;top:202.5px;width:40px;text-align:center">15</span>
<span class="rt" style="left:1621.5px;top:202.5px;width:40px;text-align:center">16</span>
<span class="rt" style="left:63.0px;top:254.5px;width:40px;text-align:center;transform:rotate(-90deg);transform-origin:50% 50%">9</span>
<span class="rt" style="left:63.0px;top:292.2px;width:40px;text-align:center;transform:rotate(-90deg);transform-origin:50% 50%">8</span>
<span class="rt" style="left:63.0px;top:330.0px;width:40px;text-align:center;transform:rotate(-90deg);transform-origin:50% 50%">7</span>
<span class="rt" style="left:63.0px;top:367.7px;width:40px;text-align:center;transform:rotate(-90deg);transform-origin:50% 50%">6</span>
<span class="rt" style="left:63.0px;top:405.4px;width:40px;text-align:center;transform:rotate(-90deg);transform-origin:50% 50%">5</span>
<span class="rt" style="left:63.0px;top:443.1px;width:40px;text-align:center;transform:rotate(-90deg);transform-origin:50% 50%">4</span>
<span class="rt" style="left:63.0px;top:480.8px;width:40px;text-align:center;transform:rotate(-90deg);transform-origin:50% 50%">3</span>
<span class="rt" style="left:63.0px;top:518.6px;width:40px;text-align:center;transform:rotate(-90deg);transform-origin:50% 50%">2</span>
<span class="rt" style="left:63.0px;top:556.3px;width:40px;text-align:center;transform:rotate(-90deg);transform-origin:50% 50%">1</span>
<span class="rt" style="left:63.0px;top:594.0px;width:40px;text-align:center;transform:rotate(-90deg);transform-origin:50% 50%">0</span>
<span class="rt" style="left:63.0px;top:631.7px;width:40px;text-align:center;transform:rotate(-90deg);transform-origin:50% 50%">1</span>
<span class="rt" style="left:63.0px;top:669.4px;width:40px;text-align:center;transform:rotate(-90deg);transform-origin:50% 50%">2</span>
<span class="rt" style="left:63.0px;top:707.2px;width:40px;text-align:center;transform:rotate(-90deg);transform-origin:50% 50%">3</span>
<span class="rt" style="left:63.0px;top:744.9px;width:40px;text-align:center;transform:rotate(-90deg);transform-origin:50% 50%">4</span>
<span class="rt" style="left:63.0px;top:782.6px;width:40px;text-align:center;transform:rotate(-90deg);transform-origin:50% 50%">5</span>
<span class="rt" style="left:63.0px;top:820.3px;width:40px;text-align:center;transform:rotate(-90deg);transform-origin:50% 50%">6</span>
<span class="rt" style="left:63.0px;top:858.0px;width:40px;text-align:center;transform:rotate(-90deg);transform-origin:50% 50%">7</span>
<span class="rt" style="left:63.0px;top:895.8px;width:40px;text-align:center;transform:rotate(-90deg);transform-origin:50% 50%">8</span>
<span class="rt" style="left:63.0px;top:933.5px;width:40px;text-align:center;transform:rotate(-90deg);transform-origin:50% 50%">9</span>
<span class="t" style="left:22.800px;top:339.500px;font-size:18.750px;color:#555;transform:rotate(-90deg) scaleX(.815);transform-origin:0 0">サムネイル</span>
</body></html>
